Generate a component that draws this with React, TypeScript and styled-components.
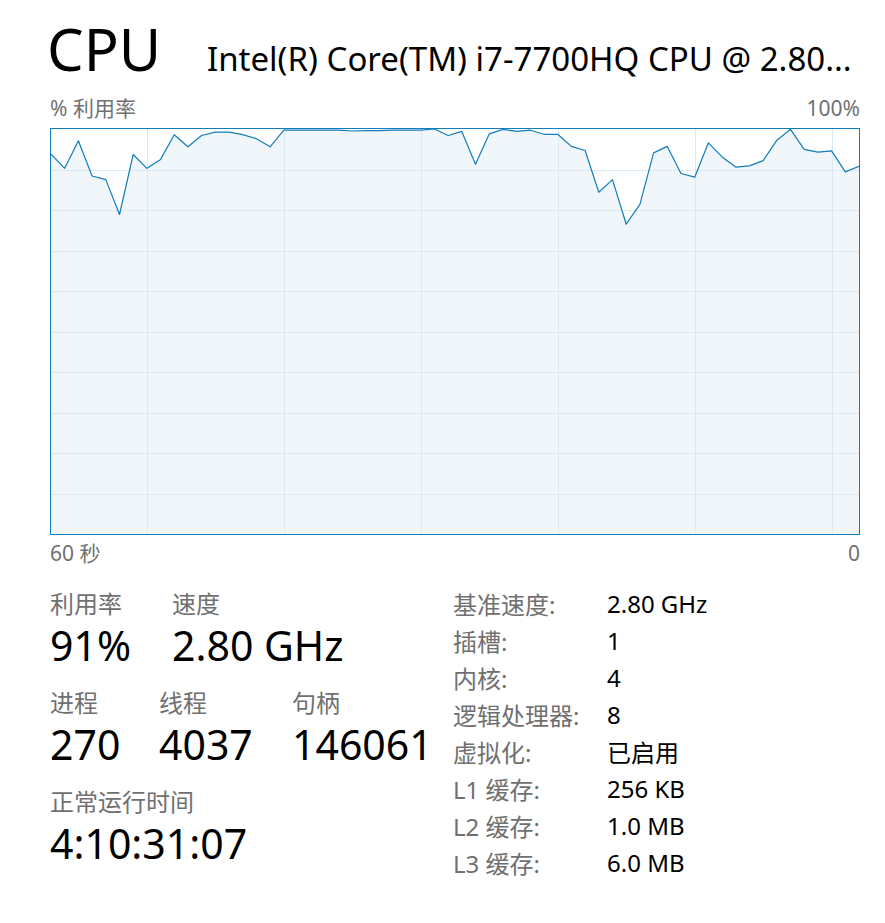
import { Fragment } from "react";
import styled, { createGlobalStyle } from "styled-components";

const GlobalStyle = createGlobalStyle`
  body {
    margin: 0;
    background: #ffffff;
    font-family: "Noto Sans", "Noto Sans CJK SC", sans-serif;
    color: #000000;
  }
`;

// CPU usage, one sample per second, oldest first
const usage: number[] = [
  93.8, 90.3, 97.1, 88.4, 87.5, 78.9, 93.7, 90.3, 92.5, 98.6,
  95.6, 98.4, 99.2, 99.2, 98.6, 97.6, 95.6, 99.7, 99.7, 99.7,
  99.7, 99.7, 99.5, 99.6, 99.6, 99.7, 99.7, 99.7, 100, 98.4,
  99.4, 91.3, 98.8, 99.9, 99.4, 99.7, 98.7, 98.7, 95.7, 94.7,
  84.4, 87.5, 76.5, 81.4, 94.1, 95.7, 89.0, 88.1, 96.6, 93.1,
  90.6, 90.9, 92.2, 97.2, 99.9, 95.0, 94.3, 94.6, 89.4, 90.8,
];

const CHART_W = 808;
const CHART_H = 405;

const details: { label: string; value: string }[] = [
  { label: "基准速度:", value: "2.80 GHz" },
  { label: "插槽:", value: "1" },
  { label: "内核:", value: "4" },
  { label: "逻辑处理器:", value: "8" },
  { label: "虚拟化:", value: "已启用" },
  { label: "L1 缓存:", value: "256 KB" },
  { label: "L2 缓存:", value: "1.0 MB" },
  { label: "L3 缓存:", value: "6.0 MB" },
];

const UsageChart = () => {
  const step = CHART_W / (usage.length - 1);
  const points = usage
    .map((p, i) => `${(i * step).toFixed(1)},${(((100 - p) / 100) * CHART_H).toFixed(1)}`)
    .join(" ");
  const rows = Array.from({ length: 9 }, (_, k) => Math.round(((k + 1) * CHART_H) / 10));
  const cols = Array.from({ length: 6 }, (_, k) => Math.round(96 + k * step * 10));

  return (
    <ChartFrame>
      <svg width={CHART_W} height={CHART_H} viewBox={`0 0 ${CHART_W} ${CHART_H}`}>
        <polygon points={`0,${CHART_H} ${points} ${CHART_W},${CHART_H}`} fill="#f1f6fa" />
        {rows.map((y) => (
          <line key={`r${y}`} x1={0} x2={CHART_W} y1={y + 0.5} y2={y + 0.5} stroke="#d9eaf4" strokeWidth={1} />
        ))}
        {cols.map((x) => (
          <line key={`c${x}`} x1={x + 0.5} x2={x + 0.5} y1={0} y2={CHART_H} stroke="#d9eaf4" strokeWidth={1} />
        ))}
        <polyline points={points} fill="none" stroke="#117dbb" strokeWidth={1.2} strokeLinejoin="round" />
      </svg>
    </ChartFrame>
  );
};

const App = () => {
  return (
    <>
      <GlobalStyle />
      <Page>
        <Header>
          <Title>CPU</Title>
          <Model>Intel(R) Core(TM) i7-7700HQ CPU @ 2.80...</Model>
        </Header>

        <AxisRow $side="top">
          <span>% 利用率</span>
          <span>100%</span>
        </AxisRow>
        <UsageChart />
        <AxisRow $side="bottom">
          <span>60 秒</span>
          <span>0</span>
        </AxisRow>

        <Stats>
          <LeftStats>
            <StatRow>
              <Stat $width={122}>
                <StatLabel>利用率</StatLabel>
                <StatValue>91%</StatValue>
              </Stat>
              <Stat>
                <StatLabel>速度</StatLabel>
                <StatValue>2.80 GHz</StatValue>
              </Stat>
            </StatRow>
            <StatRow>
              <Stat $width={109}>
                <StatLabel>进程</StatLabel>
                <StatValue>270</StatValue>
              </Stat>
              <Stat $width={133}>
                <StatLabel>线程</StatLabel>
                <StatValue>4037</StatValue>
              </Stat>
              <Stat>
                <StatLabel>句柄</StatLabel>
                <StatValue>146061</StatValue>
              </Stat>
            </StatRow>
            <StatRow>
              <Stat>
                <StatLabel>正常运行时间</StatLabel>
                <StatValue>4:10:31:07</StatValue>
              </Stat>
            </StatRow>
          </LeftStats>

          <DetailGrid>
            {details.map((d) => (
              <Fragment key={d.label}>
                <DetailLabel>{d.label}</DetailLabel>
                <DetailValue>{d.value}</DetailValue>
              </Fragment>
            ))}
          </DetailGrid>
        </Stats>
      </Page>
    </>
  );
};

export default App;

const Page = styled.div`
  width: 810px;
  padding: 14px 0 0 50px;
`;

const Header = styled.div`
  display: flex;
  align-items: baseline;
  white-space: nowrap;
  height: 80px;
`;

const Title = styled.div`
  font-size: 58px;
  line-height: 70px;
  margin-left: -3px;
  width: 160px;
`;

const Model = styled.div`
  font-size: 33px;
  line-height: 40px;
  margin-top: -2px;
`;

const AxisRow = styled.div<{ $side: "top" | "bottom" }>`
  display: flex;
  justify-content: space-between;
  font-size: 21px;
  line-height: 28px;
  color: #707070;
  margin: ${(p) => (p.$side === "top" ? "0 0 6px" : "4px 0 0")};
`;

const ChartFrame = styled.div`
  width: 808px;
  height: 405px;
  border: 1px solid #117dbb;
  background: #ffffff;
  svg {
    display: block;
  }
`;

const Stats = styled.div`
  display: flex;
  margin-top: 18px;
`;

const LeftStats = styled.div`
  width: 403px;
  padding-top: 4px;
  display: flex;
  flex-direction: column;
  gap: 17px;
`;

const StatRow = styled.div`
  display: flex;
`;

const Stat = styled.div<{ $width?: number }>`
  width: ${(p) => (p.$width ? `${p.$width}px` : "auto")};
  display: flex;
  flex-direction: column;
`;

const StatLabel = styled.div`
  font-size: 24px;
  line-height: 30px;
  color: #707070;
`;

const StatValue = styled.div`
  font-size: 41px;
  line-height: 52px;
  white-space: nowrap;
`;

const DetailGrid = styled.div`
  display: grid;
  grid-template-columns: 154px auto;
  grid-auto-rows: 37px;
  align-items: center;
`;

const DetailLabel = styled.div`
  font-size: 24px;
  color: #707070;
  white-space: nowrap;
`;

const DetailValue = styled.div`
  font-size: 24px;
  white-space: nowrap;
`;
